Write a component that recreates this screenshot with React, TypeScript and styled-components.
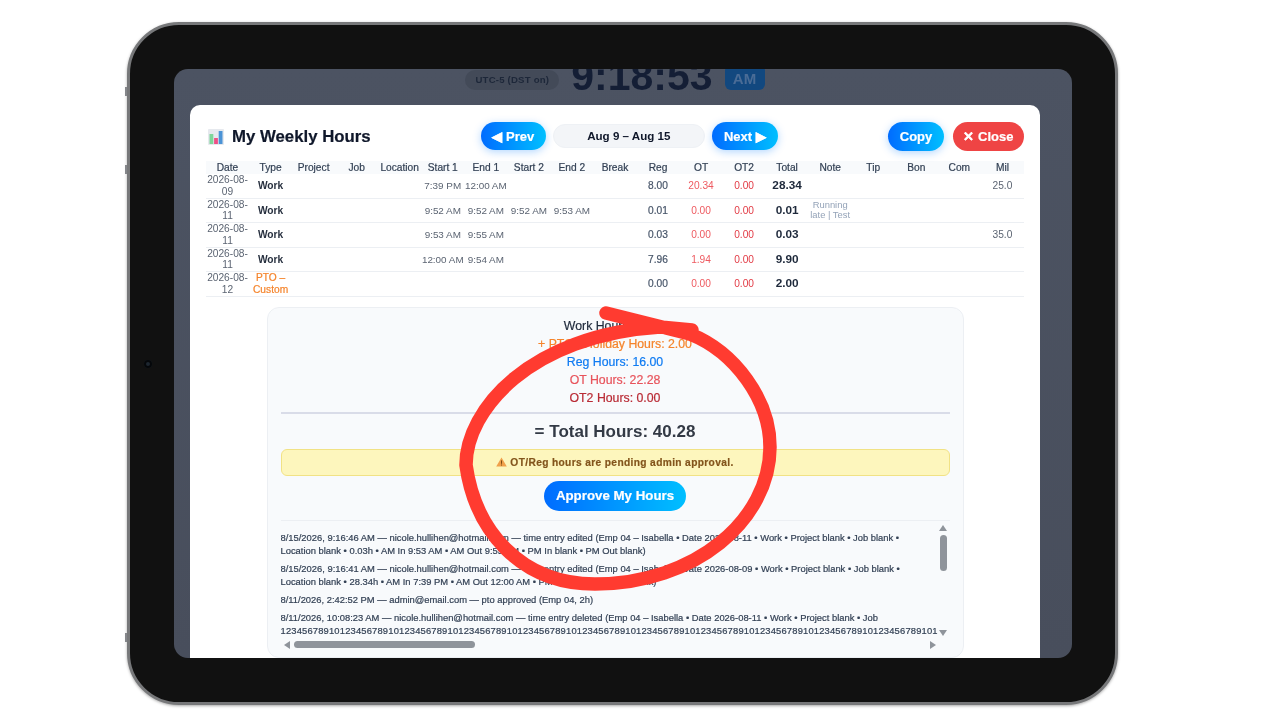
import React from "react";
import styled, { createGlobalStyle, css } from "styled-components";

type Row = {
  date: string;
  type: string;
  pto?: boolean;
  start1?: string;
  end1?: string;
  start2?: string;
  end2?: string;
  reg: string;
  ot: string;
  total: string;
  note?: string;
  mil?: string;
};

const headers = [
  "Date", "Type", "Project", "Job", "Location", "Start 1", "End 1", "Start 2", "End 2", "Break",
  "Reg", "OT", "OT2", "Total", "Note", "Tip", "Bon", "Com", "Mil",
];

const rows: Row[] = [
  { date: "2026-08-09", type: "Work", start1: "7:39 PM", end1: "12:00 AM", reg: "8.00", ot: "20.34", total: "28.34", mil: "25.0" },
  { date: "2026-08-11", type: "Work", start1: "9:52 AM", end1: "9:52 AM", start2: "9:52 AM", end2: "9:53 AM", reg: "0.01", ot: "0.00", total: "0.01", note: "Running late | Test" },
  { date: "2026-08-11", type: "Work", start1: "9:53 AM", end1: "9:55 AM", reg: "0.03", ot: "0.00", total: "0.03", mil: "35.0" },
  { date: "2026-08-11", type: "Work", start1: "12:00 AM", end1: "9:54 AM", reg: "7.96", ot: "1.94", total: "9.90" },
  { date: "2026-08-12", type: "PTO – Custom", pto: true, reg: "0.00", ot: "0.00", total: "2.00" },
];

const logEntries = [
  [
    "8/15/2026, 9:16:46 AM — nicole.hullihen@hotmail.com — time entry edited (Emp 04 – Isabella • Date 2026-08-11 • Work • Project blank • Job blank •",
    "Location blank • 0.03h • AM In 9:53 AM • AM Out 9:55 AM • PM In blank • PM Out blank)",
  ],
  [
    "8/15/2026, 9:16:41 AM — nicole.hullihen@hotmail.com — time entry edited (Emp 04 – Isabella • Date 2026-08-09 • Work • Project blank • Job blank •",
    "Location blank • 28.34h • AM In 7:39 PM • AM Out 12:00 AM • PM In blank • PM Out blank)",
  ],
  ["8/11/2026, 2:42:52 PM — admin@email.com — pto approved (Emp 04, 2h)"],
  [
    "8/11/2026, 10:08:23 AM — nicole.hullihen@hotmail.com — time entry deleted (Emp 04 – Isabella • Date 2026-08-11 • Work • Project blank • Job",
  ],
];

const longNumber = "12345678910".repeat(11) + "1";

export default function App() {
  return (
    <Page>
      <GlobalStyle />
      <Tablet>
        <SideNotch $top={62} />
        <SideNotch $top={140} />
        <SideNotch $top={608} />
        <Camera />
        <Screen>
          <ClockRow>
            <ZonePill>UTC-5 (DST on)</ZonePill>
            <Clock>9:18:53</Clock>
            <Meridiem>AM</Meridiem>
          </ClockRow>
          <Modal>
            <ModalHeader>
              <Title>
                <ChartIcon />
                My Weekly Hours
              </Title>
              <WeekNav>
                <NavButton $width={65}>◀ Prev</NavButton>
                <WeekLabel>Aug 9 – Aug 15</WeekLabel>
                <NavButton $width={66}>Next ▶</NavButton>
              </WeekNav>
              <Actions>
                <CopyButton>Copy</CopyButton>
                <CloseButton>✕ Close</CloseButton>
              </Actions>
            </ModalHeader>

            <HoursTable>
              <thead>
                <tr>
                  {headers.map((h) => (
                    <Th key={h}>{h}</Th>
                  ))}
                </tr>
              </thead>
              <tbody>
                {rows.map((r, i) => (
                  <tr key={i}>
                    <Td>{r.date}</Td>
                    <TypeCell $pto={r.pto}>{r.type}</TypeCell>
                    <Td />
                    <Td />
                    <Td />
                    <TimeCell>{r.start1}</TimeCell>
                    <TimeCell>{r.end1}</TimeCell>
                    <TimeCell>{r.start2}</TimeCell>
                    <TimeCell>{r.end2}</TimeCell>
                    <Td />
                    <RegCell>{r.reg}</RegCell>
                    <OtCell>{r.ot}</OtCell>
                    <Ot2Cell>0.00</Ot2Cell>
                    <TotalCell>{r.total}</TotalCell>
                    <NoteCell>{r.note}</NoteCell>
                    <Td />
                    <Td />
                    <Td />
                    <Td>{r.mil}</Td>
                  </tr>
                ))}
              </tbody>
            </HoursTable>

            <SummaryCard>
              <SummaryLine $color="#1e293b">Work Hours: 38.28</SummaryLine>
              <SummaryLine $color="#f5842b">+ PTO / Holiday Hours: 2.00</SummaryLine>
              <SummaryLine $color="#0f7bf2">Reg Hours: 16.00</SummaryLine>
              <SummaryLine $color="#e8535b">OT Hours: 22.28</SummaryLine>
              <SummaryLine $color="#b92b35">OT2 Hours: 0.00</SummaryLine>
              <Divider />
              <TotalLine>= Total Hours: 40.28</TotalLine>
              <Banner>
                <WarnIcon />
                OT/Reg hours are pending admin approval.
              </Banner>
              <ApproveButton>Approve My Hours</ApproveButton>
              <LogBox>
                {logEntries.map((entry, i) => (
                  <LogEntry key={i}>
                    {entry.map((line, j) => (
                      <LogLine key={j}>{line}</LogLine>
                    ))}
                    {i === logEntries.length - 1 && <LogDigits>{longNumber}</LogDigits>}
                  </LogEntry>
                ))}
                <ArrowUp />
                <VThumb />
                <ArrowDown />
                <ArrowLeft />
                <HThumb />
                <ArrowRight />
              </LogBox>
            </SummaryCard>
          </Modal>
        </Screen>
      </Tablet>
      <Scribble viewBox="0 0 1280 720">
        <path d="M606 313 L690 334 C735 352 770 400 770 447 C770 520 695 584 595 584 C520 584 475 530 466 465 C466 410 530 335 660 327 L692 330" />
      </Scribble>
    </Page>
  );
}

const ChartIcon = () => (
  <svg width="16" height="16" viewBox="0 0 16 16" style={{ flexShrink: 0 }}>
    <rect width="16" height="16" rx="1" fill="#e6e9ee" />
    <rect x="1.5" y="5" width="3.8" height="10" fill="#7ed69a" />
    <rect x="6.1" y="9" width="3.8" height="6" fill="#ee4f86" />
    <rect x="10.7" y="2" width="3.8" height="13" fill="#4b93d6" />
  </svg>
);

const WarnIcon = () => (
  <svg width="11" height="10" viewBox="0 0 11 10" style={{ flexShrink: 0 }}>
    <path d="M5.5 0.4 L10.8 9.6 H0.2 Z" fill="#f0a04b" />
    <rect x="5" y="3.4" width="1" height="3.4" fill="#7a4a12" />
    <rect x="5" y="7.5" width="1" height="1" fill="#7a4a12" />
  </svg>
);

// the reference text sits between regular and bold
const medium = css`
  -webkit-text-stroke: 0.2px currentColor;
`;

const GlobalStyle = createGlobalStyle`
  html, body {
    margin: 0;
    background: #ffffff;
  }
  body {
    font-family: "Liberation Sans", Arial, sans-serif;
  }
`;

const Page = styled.div`
  position: relative;
  width: 1280px;
  height: 720px;
  padding: 22px 0 0 127px;
  box-sizing: border-box;
  overflow: hidden;
`;

const Tablet = styled.div`
  position: relative;
  width: 991px;
  height: 683px;
  box-sizing: border-box;
  padding: 44px 43px 44px 44px;
  background: #111111;
  border: 3px solid #77787a;
  border-radius: 52px;
  box-shadow: 0 1px 3px rgba(0, 0, 0, 0.35);
  filter: blur(0.35px);
`;

const SideNotch = styled.div<{ $top: number }>`
  position: absolute;
  left: -5px;
  top: ${(p) => p.$top}px;
  width: 2px;
  height: 9px;
  background: #85878b;
`;

const Camera = styled.div`
  position: absolute;
  left: 14px;
  top: 335px;
  width: 8px;
  height: 8px;
  border-radius: 50%;
  background: #1d2630;
  box-shadow: inset 0 0 0 2px #05070a;
`;

const Screen = styled.div`
  height: 100%;
  box-sizing: border-box;
  padding: 0 32px 0 16px;
  display: flex;
  flex-direction: column;
  overflow: hidden;
  border-radius: 14px;
  background: linear-gradient(180deg, #4c5362, #484e5c);
`;

const ClockRow = styled.div`
  flex: 0 0 36px;
  display: flex;
  align-items: flex-start;
  justify-content: center;
  gap: 12px;
`;

const ZonePill = styled.div`
  margin-top: 1px;
  padding: 0 10px;
  height: 20px;
  line-height: 20px;
  border-radius: 10px;
  background: #434a58;
  color: #1d2739;
  font-size: 9.6px;
  font-weight: 700;
  letter-spacing: 0.2px;
`;

const Clock = styled.div`
  margin-top: -16px;
  font-size: 41px;
  line-height: 47px;
  font-weight: 700;
  color: #141e35;
`;

const Meridiem = styled.div`
  margin-top: -4px;
  width: 40px;
  height: 25px;
  padding-top: 2px;
  box-sizing: border-box;
  text-align: center;
  line-height: 23px;
  border-radius: 6px;
  background: #12487f;
  color: #4a6c96;
  font-size: 15px;
  font-weight: 700;
`;

const Modal = styled.div`
  flex: 1;
  min-height: 0;
  padding: 16px 16px 0 16px;
  background: #ffffff;
  border-radius: 10px 10px 0 0;
  overflow: hidden;
`;

const ModalHeader = styled.div`
  display: flex;
  align-items: center;
  justify-content: space-between;
  height: 30px;
  margin-bottom: 10px;
  padding-left: 2px;
`;

const Title = styled.div`
  display: flex;
  align-items: center;
  gap: 8px;
  margin-top: 1px;
  font-size: 16.8px;
  font-weight: 700;
  color: #0f172a;
  white-space: nowrap;
  ${medium}
`;

const WeekNav = styled.div`
  display: flex;
  align-items: center;
  gap: 7px;
`;

const Actions = styled.div`
  display: flex;
  align-items: center;
  gap: 9px;
`;

const pill = css`
  padding: 0;
  border: 0;
  border-radius: 15px;
  color: #ffffff;
  font-family: inherit;
  font-size: 13px;
  font-weight: 700;
  white-space: nowrap;
  ${medium}
`;

const NavButton = styled.button<{ $width: number }>`
  ${pill}
  width: ${(p) => p.$width}px;
  height: 28px;
  background: linear-gradient(90deg, #006cff, #00bfff);
  box-shadow: 0 2px 8px rgba(0, 122, 255, 0.3);
`;

const CopyButton = styled.button`
  ${pill}
  width: 56px;
  height: 29px;
  background: linear-gradient(90deg, #006cff, #00bfff);
  box-shadow: 0 2px 8px rgba(0, 122, 255, 0.3);
`;

const CloseButton = styled.button`
  ${pill}
  width: 71px;
  height: 29px;
  background: #ef4444;
`;

const WeekLabel = styled.div`
  width: 152px;
  height: 24px;
  box-sizing: border-box;
  line-height: 22px;
  text-align: center;
  border: 1px solid #eef1f5;
  border-radius: 12px;
  background: #f3f5f8;
  color: #0f172a;
  font-size: 11.6px;
  font-weight: 700;
`;

const HoursTable = styled.table`
  width: 818px;
  table-layout: fixed;
  border-collapse: collapse;
  font-size: 10px;
`;

const Th = styled.th`
  height: 13px;
  padding: 0;
  background: #f8fafc;
  color: #334155;
  font-size: 10.2px;
  font-weight: 500;
  text-align: center;
  white-space: nowrap;
  ${medium}
`;

const Td = styled.td`
  height: 23.5px;
  padding: 0 1px;
  border-bottom: 1px solid #eceff3;
  color: #5b6472;
  font-size: 10.2px;
  line-height: 11.5px;
  text-align: center;
`;

const TimeCell = styled(Td)`
  padding: 0;
  font-size: 9.9px;
  white-space: nowrap;
`;

const TypeCell = styled(Td)<{ $pto?: boolean }>`
  color: ${(p) => (p.$pto ? "#f5842b" : "#27303f")};
  font-weight: ${(p) => (p.$pto ? 500 : 700)};
  ${(p) => p.$pto && medium}
`;

const RegCell = styled(Td)`
  color: #475569;
  ${medium}
`;

const OtCell = styled(Td)`
  color: #ee5a60;
`;

const Ot2Cell = styled(Td)`
  color: #e23b45;
`;

const TotalCell = styled(Td)`
  color: #1e293b;
  font-size: 11.8px;
  font-weight: 700;
`;

const NoteCell = styled(Td)`
  color: #94a3b8;
  font-size: 9.4px;
  line-height: 10.5px;
`;

const SummaryCard = styled.div`
  width: 697px;
  height: 351px;
  margin: 10px auto 0;
  padding: 9px 13px 0;
  box-sizing: border-box;
  display: flex;
  flex-direction: column;
  align-items: center;
  background: #f8fafc;
  border: 1px solid #eceff3;
  border-radius: 12px;
`;

const SummaryLine = styled.div<{ $color: string }>`
  height: 18px;
  line-height: 18px;
  color: ${(p) => p.$color};
  font-size: 12.3px;
  font-weight: 500;
  white-space: nowrap;
  ${medium}
`;

const Divider = styled.div`
  align-self: stretch;
  height: 2px;
  margin-top: 5px;
  background: #d9dce8;
`;

const TotalLine = styled.div`
  margin-top: 9px;
  height: 18px;
  line-height: 18px;
  color: #333a45;
  font-size: 17px;
  font-weight: 700;
`;

const Banner = styled.div`
  align-self: stretch;
  height: 27px;
  margin-top: 8px;
  box-sizing: border-box;
  display: flex;
  align-items: center;
  justify-content: center;
  gap: 3px;
  background: #fdf6bd;
  border: 1px solid #f1e285;
  border-radius: 6px;
  color: #83551c;
  font-size: 10.2px;
  font-weight: 700;
  letter-spacing: 0.36px;
  ${medium}
`;

const ApproveButton = styled.button`
  ${pill}
  width: 142px;
  height: 30px;
  margin-top: 5px;
  flex-shrink: 0;
  background: linear-gradient(90deg, #006cff, #00bfff);
  font-size: 13.3px;
`;

const LogBox = styled.div`
  position: relative;
  align-self: stretch;
  height: 131px;
  margin-top: 9px;
  padding-top: 10px;
  box-sizing: border-box;
  overflow: hidden;
  border-top: 1px solid #eceff3;
`;

const LogEntry = styled.div`
  margin-bottom: 5px;
`;

const LogLine = styled.div`
  height: 13px;
  line-height: 13px;
  width: 659px;
  overflow: hidden;
  color: #334155;
  font-size: 9.4px;
  white-space: nowrap;
  ${medium}
`;

const LogDigits = styled(LogLine)`
  letter-spacing: 0.173px;
`;

const ArrowUp = styled.div`
  position: absolute;
  right: 3px;
  top: 4px;
  border-left: 4px solid transparent;
  border-right: 4px solid transparent;
  border-bottom: 6px solid #8f949b;
`;

const ArrowDown = styled.div`
  position: absolute;
  right: 3px;
  top: 109px;
  border-left: 4px solid transparent;
  border-right: 4px solid transparent;
  border-top: 6px solid #8f949b;
`;

const ArrowLeft = styled.div`
  position: absolute;
  left: 3px;
  top: 120px;
  border-top: 4px solid transparent;
  border-bottom: 4px solid transparent;
  border-right: 6px solid #8f949b;
`;

const ArrowRight = styled.div`
  position: absolute;
  right: 14px;
  top: 120px;
  border-top: 4px solid transparent;
  border-bottom: 4px solid transparent;
  border-left: 6px solid #8f949b;
`;

const VThumb = styled.div`
  position: absolute;
  right: 3px;
  top: 14px;
  width: 7px;
  height: 36px;
  border-radius: 4px;
  background: #8f949b;
`;

const HThumb = styled.div`
  position: absolute;
  left: 13px;
  top: 120px;
  width: 181px;
  height: 7px;
  border-radius: 4px;
  background: #8f949b;
`;

const Scribble = styled.svg`
  position: absolute;
  left: 0;
  top: 0;
  width: 1280px;
  height: 720px;
  pointer-events: none;
  fill: none;
  stroke: #ff3b30;
  stroke-width: 13.5;
  stroke-linecap: round;
  stroke-linejoin: round;
`;
